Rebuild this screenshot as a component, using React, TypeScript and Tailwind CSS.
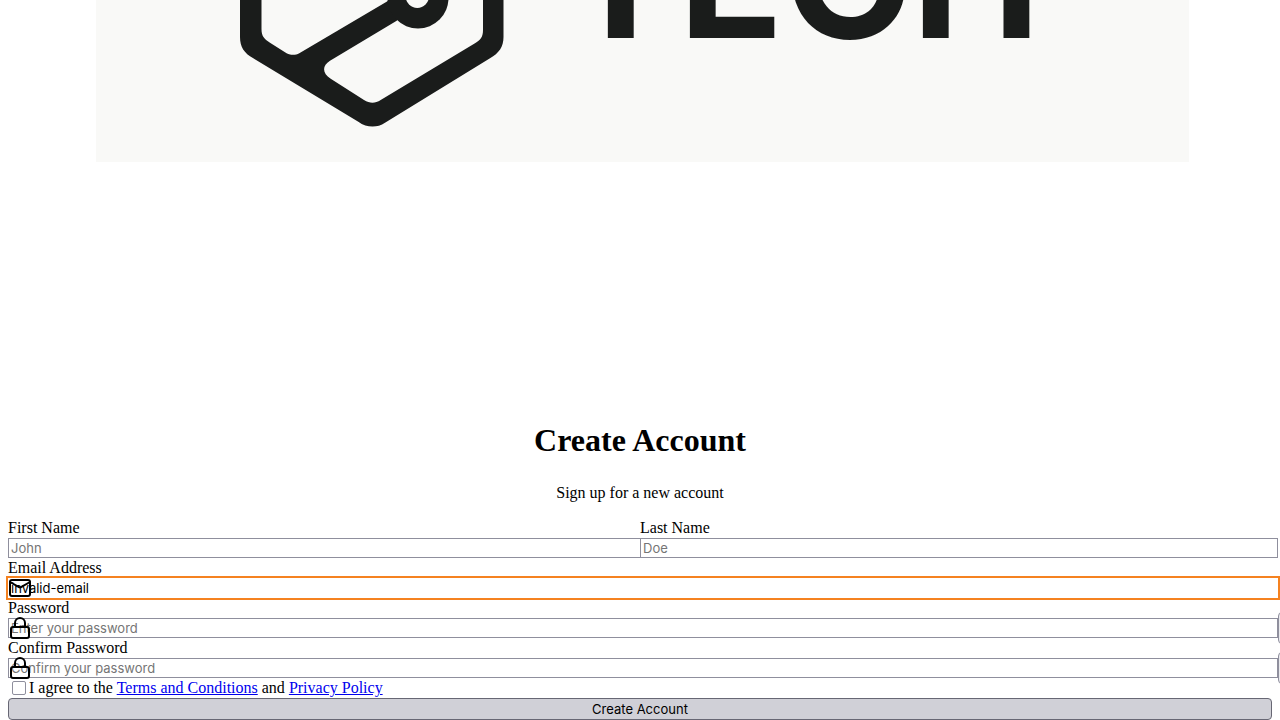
import { Lock } from "lucide-react";
import type { InputHTMLAttributes, ReactNode } from "react";

type FieldProps = InputHTMLAttributes<HTMLInputElement> & {
  id: string;
  label: string;
  icon?: ReactNode;
  revealable?: boolean;
  invalid?: boolean;
};

function Field({ id, label, icon, revealable, invalid, ...input }: FieldProps) {
  return (
    <div className="min-w-0 flex-1">
      <label htmlFor={id} className="block leading-5">
        {label}
      </label>
      <div className="relative">
        {icon && (
          <span className="pointer-events-none absolute top-1/2 left-0 -translate-y-1/2">{icon}</span>
        )}
        <input
          id={id}
          aria-invalid={invalid}
          className={
            "block h-5 w-[calc(100%+6px)] border bg-white px-0.5 font-[Inter,sans-serif] text-[13px] text-black placeholder:text-[#757575] " +
            (invalid
              ? "border-transparent outline-2 outline-[#f58220]"
              : "border-[#8f8f9d] outline-none")
          }
          {...input}
        />
        {revealable && (
          <button
            type="button"
            aria-label={"Show " + label.toLowerCase()}
            className="absolute top-1/2 left-full ml-1.5 h-8 w-9 -translate-y-1/2 rounded border border-[#8f8f9d] bg-[#e9e9ed]"
          />
        )}
      </div>
    </div>
  );
}

function MailIcon() {
  return (
    <svg
      width="24"
      height="24"
      viewBox="0 0 24 24"
      fill="none"
      stroke="currentColor"
      strokeWidth="2"
      strokeLinecap="round"
      strokeLinejoin="round"
      aria-hidden="true"
    >
      <rect x="2" y="4" width="20" height="16" rx="2" />
      <path d="m22 6-8.970 5.200a1.940 1.940 0 0 1-2.060 0L2 6" />
    </svg>
  );
}

function Logo() {
  return (
    <svg viewBox="96 0 1093 162" className="block w-full" role="img" aria-label="Tech">
      <rect x="96" y="0" width="1093" height="162" fill="#f9f9f7" />
      <path
        fill="#1a1c1b"
        d="M240 -10V37C240 47 244 53 253.300 58.300L358.300 121.700C367 128 377 128 385 122.700L490 58.300C499 53 503.500 47 503.500 37V-10Z"
      />
      <path
        fill="#f9f9f7"
        d="M261.500 -10V29C261.500 36 264 39 270 42.700L285 52.300C290 55.500 295 55.500 299.300 53.300L387 1.500L400 -10Z"
      />
      <path
        fill="#f9f9f7"
        d="M396.700 20.700L330 60.700C322 65.500 322 73.500 330.700 78.700L364 100C370 103.500 375 103.500 380.700 100L475 43.300C480.500 40 483 37 483 30V-10H420Z"
      />
      <circle cx="418" cy="-2" r="30.500" fill="#1a1c1b" />
      <circle cx="417.300" cy="-3.600" r="11.600" fill="#f9f9f7" />
      <text x="563" y="38" fontSize="173" fill="#1a1c1b" className="font-[Inter,sans-serif] font-bold">
        TECH
      </text>
    </svg>
  );
}

export default function App() {
  return (
    <main className="overflow-hidden bg-white font-['Liberation_Serif',serif] text-base text-black">
      <div className="pr-[91px] pl-24">
        <Logo />
      </div>

      <header className="pt-65 pb-[15px] text-center">
        <h1 className="text-[32px] leading-9 font-bold">Create Account</h1>
        <p className="pt-[25px] leading-5">Sign up for a new account</p>
      </header>

      <form className="px-2" onSubmit={(event) => event.preventDefault()}>
        <div className="flex">
          <Field id="first-name" label="First Name" placeholder="John" />
          <Field id="last-name" label="Last Name" placeholder="Doe" />
        </div>
        <Field
          id="email"
          label="Email Address"
          type="text"
          inputMode="email"
          defaultValue="invalid-email"
          invalid
          icon={<MailIcon />}
        />
        <Field
          id="password"
          label="Password"
          type="password"
          placeholder="Enter your password"
          revealable
          icon={<Lock size={24} />}
        />
        <Field
          id="confirm-password"
          label="Confirm Password"
          type="password"
          placeholder="Confirm your password"
          revealable
          icon={<Lock size={24} />}
        />
        <div className="flex h-5 items-center pl-1">
          <input
            id="terms"
            type="checkbox"
            className="mr-[3px] size-3.5 appearance-none rounded-xs border border-[#8f8f9d] bg-white"
          />
          <label htmlFor="terms" className="leading-5">
            I agree to the{" "}
            <a href="#terms" className="text-[#0000ee] underline">
              Terms and Conditions
            </a>{" "}
            and{" "}
            <a href="#privacy" className="text-[#0000ee] underline">
              Privacy Policy
            </a>
          </label>
        </div>
        <button
          type="submit"
          className="block h-[22px] w-full rounded border border-[#676774] bg-[#d0d0d7] font-[Inter,sans-serif] text-[13px] leading-5 text-black"
        >
          Create Account
        </button>
      </form>
    </main>
  );
}
